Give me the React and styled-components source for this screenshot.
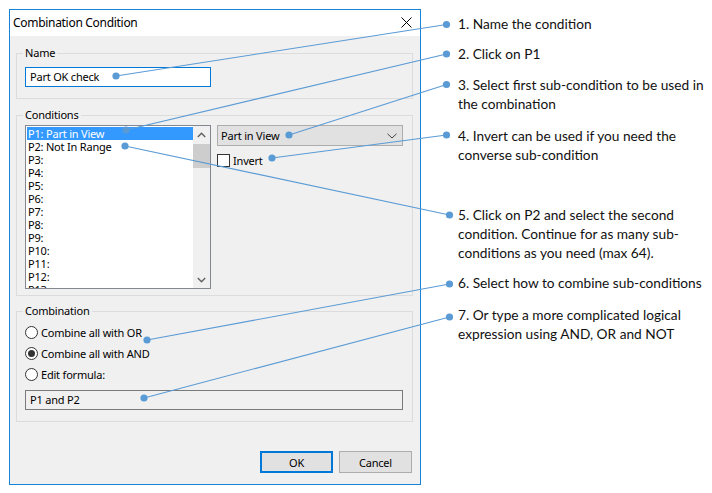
import React from "react";
import styled, { createGlobalStyle } from "styled-components";

const UI_FONT = `"Noto Sans", "DejaVu Sans", sans-serif`;
const NOTE_FONT = `Lato, "Open Sans", sans-serif`;
const LEADER = "#5b9bd5";

const CONDITIONS = [
  "P1: Part in View",
  "P2: Not In Range",
  "P3:",
  "P4:",
  "P5:",
  "P6:",
  "P7:",
  "P8:",
  "P9:",
  "P10:",
  "P11:",
  "P12:",
  "P13:",
];

const NOTES = [
  { gap: 0, lines: ["1. Name the condition"] },
  { gap: 11, lines: ["2. Click on P1"] },
  { gap: 12, lines: ["3. Select first sub-condition to be used in", "the combination"] },
  { gap: 13, lines: ["4. Invert can be used if you need the", "converse sub-condition"] },
  {
    gap: 41,
    lines: [
      "5. Click on P2 and select the second",
      "condition. Continue for as many sub-",
      "conditions as you need (max 64).",
    ],
  },
  { gap: 11, lines: ["6. Select how to combine sub-conditions"] },
  { gap: 13, lines: ["7. Or type a more complicated logical", "expression using AND, OR and NOT"] },
];

// leader lines: from the control in the dialog to the note
const LEADERS = [
  [116, 76, 446.5, 24.5],
  [126, 130, 446.5, 54],
  [289, 135, 446.5, 84.5],
  [272, 158, 446.5, 135],
  [125, 146, 449.5, 215],
  [147, 340, 449.5, 284],
  [144, 398, 449.5, 317],
];

function App() {
  return (
    <>
      <GlobalStyle />
      <Page>
        <Dialog>
          <TitleBar>
            <Title>Combination Condition</Title>
            <CloseButton>
              <svg width="11" height="11" viewBox="0 0 11 11">
                <path d="M0.5 0.5 L10.5 10.5 M10.5 0.5 L0.5 10.5" stroke="#000" strokeWidth="1" />
              </svg>
            </CloseButton>
          </TitleBar>
          <DialogBody>
            <Group $top={10} $pt={7} $pb={11}>
              <Legend>Name</Legend>
              <TextBox $focused>Part OK check</TextBox>
            </Group>

            <Group $top={9} $pt={3} $pb={6}>
              <Legend>Conditions</Legend>
              <ConditionsRow>
                <ListBox>
                  <ListItems>
                    {CONDITIONS.map((c, i) => (
                      <ListItem key={c} $selected={i === 0}>
                        {c}
                      </ListItem>
                    ))}
                  </ListItems>
                  <ScrollBar>
                    <ScrollArrow>
                      <svg width="9" height="6" viewBox="0 0 9 6">
                        <path d="M0.8 5 L4.5 1.3 L8.2 5" fill="none" stroke="#606060" strokeWidth="1.4" />
                      </svg>
                    </ScrollArrow>
                    <ScrollTrack>
                      <ScrollThumb />
                    </ScrollTrack>
                    <ScrollArrow>
                      <svg width="9" height="6" viewBox="0 0 9 6">
                        <path d="M0.8 1 L4.5 4.7 L8.2 1" fill="none" stroke="#606060" strokeWidth="1.4" />
                      </svg>
                    </ScrollArrow>
                  </ScrollBar>
                </ListBox>
                <SidePanel>
                  <Select>
                    <span>Part in View</span>
                    <svg width="10" height="6" viewBox="0 0 10 6">
                      <path d="M0.5 0.8 L5 5 L9.5 0.8" fill="none" stroke="#444" strokeWidth="1" />
                    </svg>
                  </Select>
                  <CheckRow>
                    <CheckBox />
                    <span>Invert</span>
                  </CheckRow>
                </SidePanel>
              </ConditionsRow>
            </Group>

            <Group $top={8} $pt={4} $pb={11}>
              <Legend>Combination</Legend>
              <RadioRow>
                <Radio />
                <span>Combine all with OR</span>
              </RadioRow>
              <RadioRow>
                <Radio $checked />
                <span>Combine all with AND</span>
              </RadioRow>
              <RadioRow>
                <Radio />
                <span>Edit formula:</span>
              </RadioRow>
              <FormulaBox>P1 and P2</FormulaBox>
            </Group>

            <ButtonRow>
              <Button $default>OK</Button>
              <Button>Cancel</Button>
            </ButtonRow>
          </DialogBody>
        </Dialog>

        <Notes>
          {NOTES.map((n) => (
            <Note key={n.lines[0]} $gap={n.gap}>
              {n.lines.map((l) => (
                <div key={l}>{l}</div>
              ))}
            </Note>
          ))}
        </Notes>

        <Leaders width="712" height="493" viewBox="0 0 712 493">
          {LEADERS.map(([x1, y1, x2, y2]) => (
            <g key={`${x1}-${y1}`}>
              <line x1={x1} y1={y1} x2={x2} y2={y2} stroke={LEADER} strokeWidth="1.1" />
              <circle cx={x1} cy={y1} r="3.6" fill={LEADER} />
              <circle cx={x2} cy={y2} r="3.6" fill={LEADER} />
            </g>
          ))}
        </Leaders>
      </Page>
    </>
  );
}
export default App;

const GlobalStyle = createGlobalStyle`
  html, body {
    margin: 0;
    padding: 0;
    background: #fff;
  }
  * {
    box-sizing: border-box;
  }
`;

const Page = styled.div`
  position: relative;
  display: flex;
  align-items: flex-start;
  width: 712px;
  height: 493px;
  padding: 9px 0 0 9px;
  overflow: hidden;
`;

const Dialog = styled.div`
  display: flex;
  flex-direction: column;
  width: 412px;
  height: 476px;
  border: 1px solid #1883d7;
  background: #f0f0f0;
  font-family: ${UI_FONT};
  font-size: 11px;
  letter-spacing: -0.2px;
  color: #000;
`;

const TitleBar = styled.div`
  display: flex;
  align-items: center;
  justify-content: space-between;
  height: 26px;
  padding: 0 0 1px 3px;
  background: #fff;
`;

const Title = styled.span`
  font-size: 12px;
  letter-spacing: -0.3px;
`;

const CloseButton = styled.div`
  display: flex;
  align-items: center;
  justify-content: center;
  width: 28px;
  height: 26px;
`;

const DialogBody = styled.div`
  display: flex;
  flex-direction: column;
  flex: 1;
  padding: 0 7px 0 6px;
`;

const Group = styled.fieldset`
  margin: ${(p) => p.$top}px 0 0;
  padding: ${(p) => p.$pt}px 8px ${(p) => p.$pb}px 8px;
  border: 1px solid #dcdcdc;
  min-width: 0;
`;

const Legend = styled.legend`
  margin-left: -2px;
  padding: 0 2px;
  font-size: 11px;
  line-height: 14px;
`;

const TextBox = styled.div`
  width: 186px;
  height: 20px;
  padding: 0 4px;
  border: 1px solid ${(p) => (p.$focused ? "#0078d7" : "#7a7a7a")};
  background: #fff;
  line-height: 18px;
`;

const FormulaBox = styled(TextBox)`
  width: 378px;
  margin-top: 5px;
  border-color: #7a7a7a;
  background: #f0f0f0;
`;

const ConditionsRow = styled.div`
  display: flex;
  gap: 6px;
`;

const ListBox = styled.div`
  display: flex;
  width: 186px;
  height: 164px;
  border: 1px solid #828790;
  background: #fff;
`;

const ListItems = styled.div`
  flex: 1;
  padding: 1px 0 0 1px;
  overflow: hidden;
`;

const ListItem = styled.div`
  height: 13px;
  padding-left: 1px;
  line-height: 13px;
  white-space: nowrap;
  background: ${(p) => (p.$selected ? "#3399ff" : "transparent")};
  color: ${(p) => (p.$selected ? "#fff" : "#000")};
`;

const ScrollBar = styled.div`
  display: flex;
  flex-direction: column;
  width: 17px;
  background: #f0f0f0;
`;

const ScrollArrow = styled.div`
  display: flex;
  align-items: center;
  justify-content: center;
  height: 17px;
`;

const ScrollTrack = styled.div`
  flex: 1;
`;

const ScrollThumb = styled.div`
  height: 24px;
  margin: 1px 0 0;
  background: #cdcdcd;
`;

const SidePanel = styled.div`
  display: flex;
  flex-direction: column;
  gap: 8px;
`;

const Select = styled.div`
  display: flex;
  align-items: center;
  justify-content: space-between;
  width: 186px;
  height: 21px;
  padding: 0 5px 0 3px;
  border: 1px solid #adadad;
  background: #e1e1e1;
`;

const CheckRow = styled.div`
  display: flex;
  align-items: center;
  gap: 3px;
  height: 13px;
`;

const CheckBox = styled.span`
  width: 13px;
  height: 13px;
  border: 1px solid #333;
  background: #fff;
`;

const RadioRow = styled.div`
  display: flex;
  align-items: center;
  gap: 3px;
  height: 21px;
`;

const Radio = styled.span`
  position: relative;
  width: 13px;
  height: 13px;
  border: 1px solid #333;
  border-radius: 50%;
  background: #fff;

  &::after {
    content: "";
    display: ${(p) => (p.$checked ? "block" : "none")};
    position: absolute;
    top: 2px;
    left: 2px;
    width: 7px;
    height: 7px;
    border-radius: 50%;
    background: #333;
  }
`;

const ButtonRow = styled.div`
  display: flex;
  justify-content: flex-end;
  gap: 6px;
  margin-top: 29px;
  padding-right: 1px;
`;

const Button = styled.div`
  display: flex;
  align-items: center;
  justify-content: center;
  width: 73px;
  height: 22px;
  border: ${(p) => (p.$default ? "2px solid #0078d7" : "1px solid #adadad")};
  background: #e1e1e1;
`;

const Notes = styled.div`
  display: flex;
  flex-direction: column;
  margin-left: 37px;
  padding-top: 5px;
  font-family: ${NOTE_FONT};
  font-size: 13.7px;
  line-height: 19px;
  color: #111;
`;

const Note = styled.div`
  margin-top: ${(p) => p.$gap}px;
  white-space: nowrap;
`;

const Leaders = styled.svg`
  position: absolute;
  top: 0;
  left: 0;
  pointer-events: none;
`;
